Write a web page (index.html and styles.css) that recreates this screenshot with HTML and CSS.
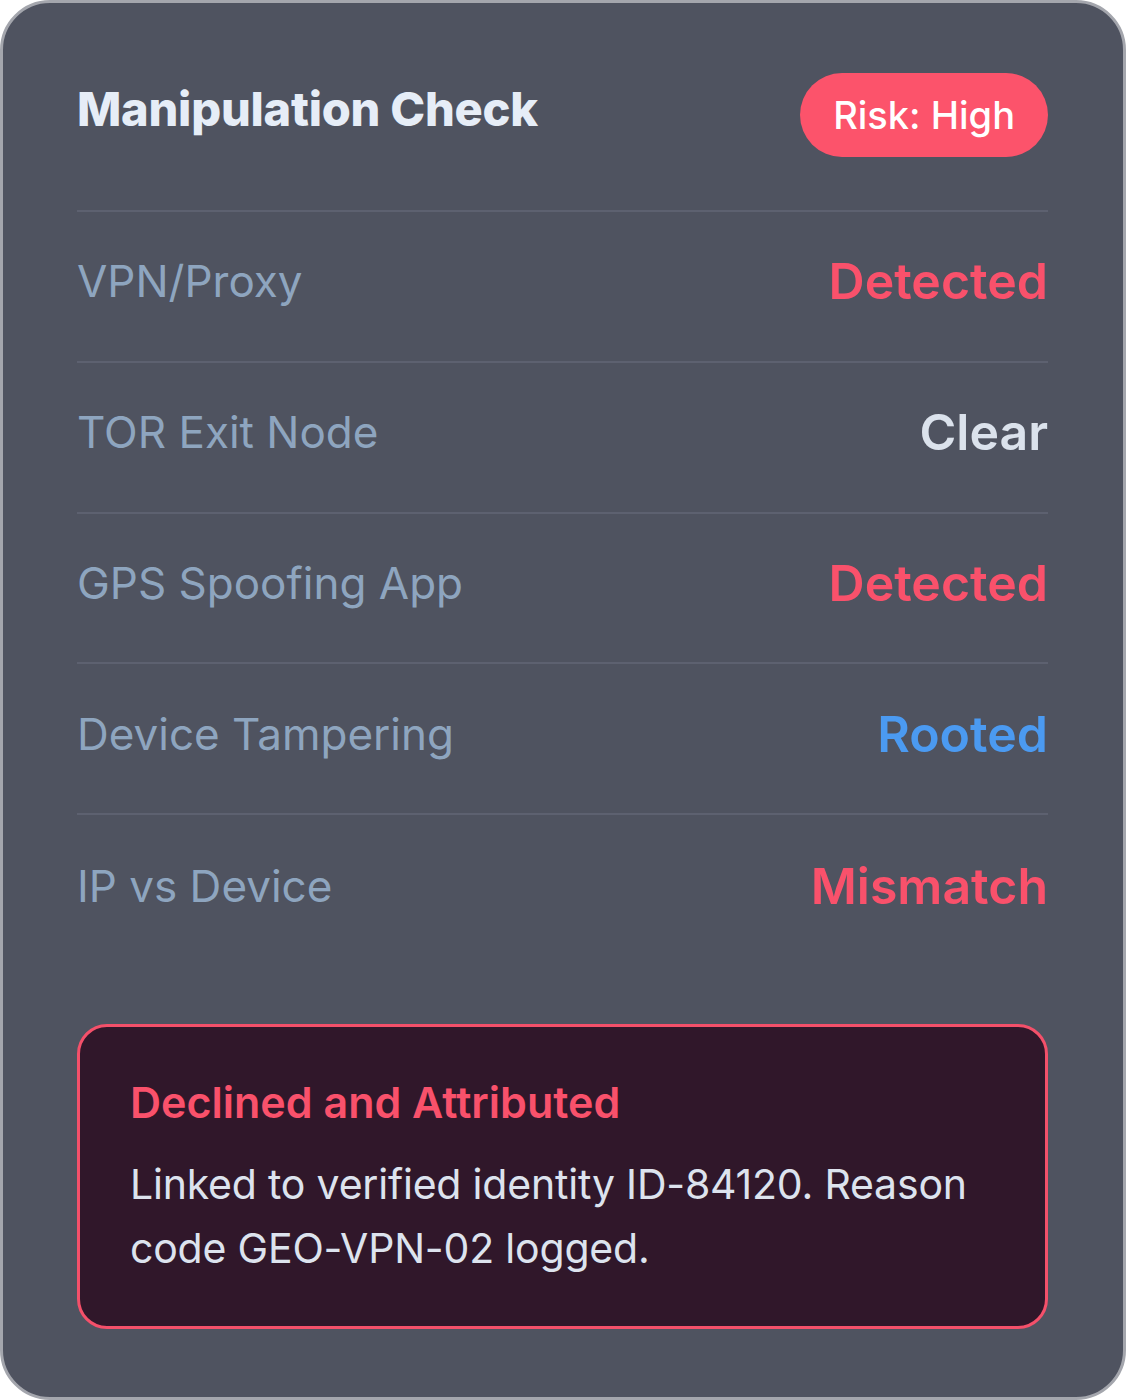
FILE: index.html
```html
<!DOCTYPE html>
<html lang="en">
<head>
<meta charset="utf-8">
<title>Manipulation Check</title>
<link rel="stylesheet" href="styles.css">
</head>
<body>
<div class="card">
  <div class="header">
    <h1 class="title">Manipulation Check</h1>
    <span class="pill">Risk: High</span>
  </div>
  <div class="row">
    <span class="label">VPN/Proxy</span>
    <span class="value red">Detected</span>
  </div>
  <div class="row">
    <span class="label">TOR Exit Node</span>
    <span class="value light">Clear</span>
  </div>
  <div class="row">
    <span class="label">GPS Spoofing App</span>
    <span class="value red">Detected</span>
  </div>
  <div class="row">
    <span class="label">Device Tampering</span>
    <span class="value blue">Rooted</span>
  </div>
  <div class="row last">
    <span class="label">IP vs Device</span>
    <span class="value red">Mismatch</span>
  </div>
  <div class="alert">
    <div class="alert-title">Declined and Attributed</div>
    <p class="alert-body">Linked to verified identity ID-84120. Reason code GEO-VPN-02 logged.</p>
  </div>
</div>
</body>
</html>
```

FILE: styles.css
```css
* { box-sizing: border-box; }
html, body { margin: 0; padding: 0; background: #ffffff; }
body { font-family: Inter, "Noto Sans", sans-serif; }

.card {
  width: 1126px;
  height: 1400px;
  background: #4f5360;
  border: 3px solid #a4a6ad;
  border-radius: 50px;
  padding: 70px 75px 68px 74px;
  display: flex;
  flex-direction: column;
}

.header {
  display: flex;
  justify-content: space-between;
  align-items: center;
  padding-bottom: 53px;
  border-bottom: 2px solid #5d6170;
}

.title {
  margin: 0;
  font-size: 47px;
  font-weight: 800;
  color: #e6edf7;
  letter-spacing: -0.25px;
  line-height: 1.2;
  margin-top: -12px;
}

.pill {
  display: inline-flex;
  align-items: center;
  height: 84px;
  padding: 0 33px;
  border-radius: 42px;
  background: #fc536b;
  color: #ffffff;
  font-size: 38px;
  font-weight: 500;
}

.row {
  height: 151px;
  display: flex;
  justify-content: space-between;
  align-items: center;
  border-bottom: 2px solid #5d6170;
  padding-bottom: 10px;
}
.row.last { border-bottom: none; }

.label {
  font-size: 44px;
  font-weight: 400;
  color: #8ea5bf;
}

.value {
  font-size: 50px;
  font-weight: 600;
}
.red { color: #f9516b; }
.light { color: #dbe2ec; }
.blue { color: #4b9af1; }

.alert {
  margin-top: 58px;
  border: 3px solid #f4506a;
  border-radius: 30px;
  background: #30172a;
  padding: 51px 50px 46px;
}

.alert-title {
  font-size: 43px;
  font-weight: 600;
  line-height: 48px;
  color: #f9516b;
}

.alert-body {
  margin: 26px 0 0;
  font-size: 41px;
  letter-spacing: -0.2px;
  line-height: 64px;
  font-weight: 400;
  color: #dde3ee;
}
```
